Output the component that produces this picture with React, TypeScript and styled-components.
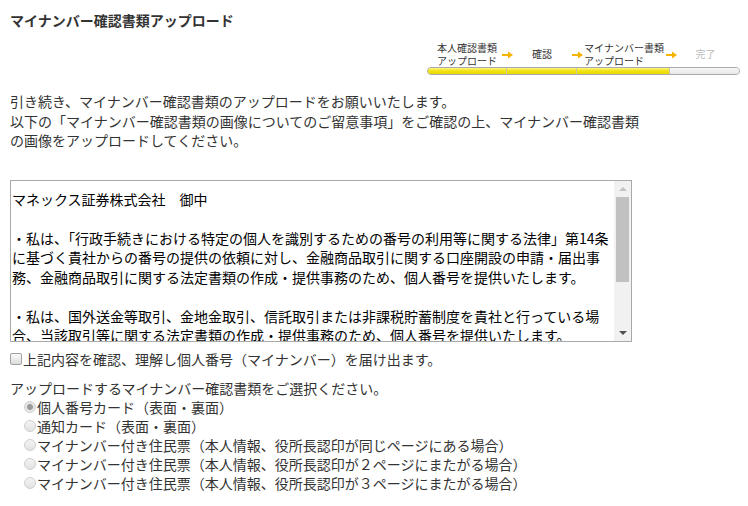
import React from 'react';
import styled, { createGlobalStyle } from 'styled-components';

const GlobalStyle = createGlobalStyle`
  body {
    margin: 0;
    background: #fff;
    color: #333;
    font-family: "Noto Sans CJK JP", "Noto Sans", sans-serif;
  }
`;

interface Step {
  label: string[];
  width: number;
  done: boolean;
}

const steps: Step[] = [
  { label: ['本人確認書類', 'アップロード'], width: 80, done: true },
  { label: ['確認'], width: 70, done: true },
  { label: ['マイナンバー書類', 'アップロード'], width: 94, done: true },
  { label: ['完了'], width: 69, done: false },
];

const documents = [
  '個人番号カード（表面・裏面）',
  '通知カード（表面・裏面）',
  'マイナンバー付き住民票（本人情報、役所長認印が同じページにある場合）',
  'マイナンバー付き住民票（本人情報、役所長認印が２ページにまたがる場合）',
  'マイナンバー付き住民票（本人情報、役所長認印が３ページにまたがる場合）',
];

const Arrow = () => (
  <svg width="11" height="8" viewBox="0 0 11 8">
    <path d="M0 4 H7" stroke="#f5b400" strokeWidth="2" />
    <path d="M6 0.5 L11 4 L6 7.5 Z" fill="#f5b400" />
  </svg>
);

const App: React.FC = () => {
  return (
    <Page>
      <GlobalStyle />
      <Title>マイナンバー確認書類アップロード</Title>

      <StepArea>
        <StepLabels>
          {steps.map((step, index) => (
            <StepCell key={index} width={step.width} done={step.done}>
              <StepText>
                {step.label.map((line, i) => (
                  <div key={i}>{line}</div>
                ))}
              </StepText>
              {index < steps.length - 1 && (
                <ArrowMark>
                  <Arrow />
                </ArrowMark>
              )}
            </StepCell>
          ))}
        </StepLabels>
        <ProgressBar>
          {steps.map((step, index) => (
            <Segment key={index} width={step.width} done={step.done} last={index === steps.length - 1} />
          ))}
        </ProgressBar>
      </StepArea>

      <Intro>
        引き続き、マイナンバー確認書類のアップロードをお願いいたします。
        <br />
        以下の「マイナンバー確認書類の画像についてのご留意事項」をご確認の上、マイナンバー確認書類
        <br />
        の画像をアップロードしてください。
      </Intro>

      <TermsBox>
        <TermsText>
          <div>マネックス証券株式会社　御中</div>
          <div>&nbsp;</div>
          <div>・私は、「行政手続きにおける特定の個人を識別するための番号の利用等に関する法律」第14条</div>
          <div>に基づく貴社からの番号の提供の依頼に対し、金融商品取引に関する口座開設の申請・届出事</div>
          <div>務、金融商品取引に関する法定書類の作成・提供事務のため、個人番号を提供いたします。</div>
          <div>&nbsp;</div>
          <div>・私は、国外送金等取引、金地金取引、信託取引または非課税貯蓄制度を貴社と行っている場</div>
          <div>合、当該取引等に関する法定書類の作成・提供事務のため、個人番号を提供いたします。</div>
        </TermsText>
        <ScrollBar>
          <ScrollButton>
            <TriangleUp />
          </ScrollButton>
          <Thumb />
          <Track />
          <ScrollButton>
            <TriangleDown />
          </ScrollButton>
        </ScrollBar>
      </TermsBox>

      <AgreeRow>
        <CheckBox />
        上記内容を確認、理解し個人番号（マイナンバー）を届け出ます。
      </AgreeRow>

      <Prompt>アップロードするマイナンバー確認書類をご選択ください。</Prompt>
      <RadioList>
        {documents.map((doc, index) => (
          <RadioRow key={index}>
            <Radio checked={index === 0} />
            {doc}
          </RadioRow>
        ))}
      </RadioList>
    </Page>
  );
};

const Page = styled.div`
  padding: 0 8px 0 10px;
  width: 748px;
  box-sizing: border-box;
`;

const Title = styled.h1`
  margin: 0;
  padding-top: 11px;
  font-size: 14px;
  line-height: 19px;
  font-weight: bold;
  color: #333;
`;

const StepArea = styled.div`
  margin-top: 12px;
  display: flex;
  flex-direction: column;
  align-items: flex-end;
`;

const StepLabels = styled.div`
  display: flex;
  width: 313px;
`;

const StepCell = styled.div<{ width: number; done: boolean }>`
  position: relative;
  width: ${(p) => p.width}px;
  height: 25px;
  display: flex;
  align-items: center;
  justify-content: center;
  font-size: 10px;
  line-height: 12.5px;
  color: ${(p) => (p.done ? '#333' : '#bbb')};
`;

const StepText = styled.div`
  white-space: nowrap;
`;

const ArrowMark = styled.span`
  position: absolute;
  right: -6px;
  top: 9px;
  display: flex;
`;

const ProgressBar = styled.div`
  display: flex;
  width: 313px;
  height: 8px;
  box-sizing: border-box;
  border: 1px solid #aaa;
  border-radius: 4px;
  overflow: hidden;
  background: #ececec;
`;

const Segment = styled.div<{ width: number; done: boolean; last: boolean }>`
  width: ${(p) => p.width}px;
  height: 100%;
  box-sizing: border-box;
  border-right: ${(p) => (p.last ? 'none' : '1px solid #c8c8a0')};
  background: ${(p) =>
    p.done ? 'linear-gradient(to bottom, #fbf48a 0%, #f2e315 45%, #e9d800 100%)' : 'linear-gradient(to bottom, #f6f6f6, #e8e8e8)'};
`;

const Intro = styled.p`
  margin: 17px 0 0;
  font-size: 14px;
  line-height: 19.5px;
  white-space: nowrap;
`;

const TermsBox = styled.div`
  margin-top: 29px;
  width: 622px;
  height: 162px;
  box-sizing: border-box;
  border: 1px solid #a9a9a9;
  display: flex;
`;

const TermsText = styled.div`
  flex: 1;
  overflow: hidden;
  padding: 9px 0 0 1px;
  font-size: 14px;
  line-height: 19.5px;
  color: #000;
  white-space: nowrap;
`;

const ScrollBar = styled.div`
  width: 17px;
  background: #f1f1f1;
  display: flex;
  flex-direction: column;
`;

const ScrollButton = styled.div`
  height: 16px;
  display: flex;
  align-items: center;
  justify-content: center;
`;

const TriangleUp = styled.span`
  width: 0;
  height: 0;
  border-left: 4px solid transparent;
  border-right: 4px solid transparent;
  border-bottom: 4px solid #c3c3c3;
`;

const TriangleDown = styled.span`
  width: 0;
  height: 0;
  border-left: 4px solid transparent;
  border-right: 4px solid transparent;
  border-top: 4px solid #505050;
`;

const Thumb = styled.div`
  margin: 0 2px;
  height: 85px;
  background: #c1c1c1;
`;

const Track = styled.div`
  flex: 1;
`;

const AgreeRow = styled.label`
  margin-top: 8px;
  display: flex;
  align-items: center;
  font-size: 14px;
  line-height: 19px;
  white-space: nowrap;
`;

const CheckBox = styled.span`
  width: 12px;
  height: 12px;
  margin-right: 1px;
  box-sizing: border-box;
  border: 1px solid #a0a0a0;
  border-radius: 2px;
  background: linear-gradient(to bottom, #fafafa, #dcdcdc);
`;

const Prompt = styled.div`
  margin-top: 10px;
  font-size: 14px;
  line-height: 19px;
  white-space: nowrap;
`;

const RadioList = styled.div`
  padding-left: 14px;
`;

const RadioRow = styled.div`
  display: flex;
  align-items: center;
  font-size: 14px;
  line-height: 19px;
  white-space: nowrap;
`;

const Radio = styled.span<{ checked: boolean }>`
  width: 12px;
  height: 12px;
  margin-right: 1px;
  box-sizing: border-box;
  border: 1px solid #cfcfcf;
  border-radius: 50%;
  background: ${(p) =>
    p.checked
      ? 'radial-gradient(circle, #9a9a9a 0 2.5px, #e6e6e6 3.5px)'
      : 'linear-gradient(to bottom, #f4f4f4, #e2e2e2)'};
`;

export default App;
